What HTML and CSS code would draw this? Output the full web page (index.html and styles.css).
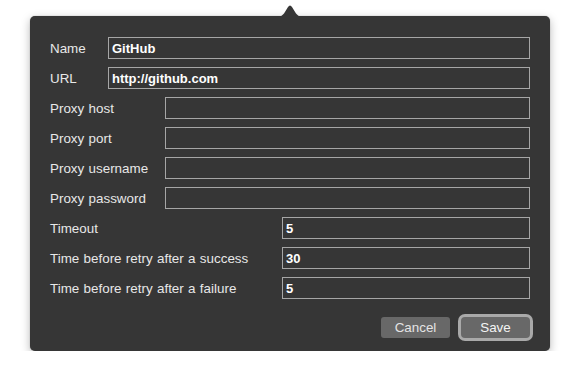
FILE: index.html
```html
<!DOCTYPE html>
<html>
<head>
<meta charset="utf-8">
<link rel="stylesheet" href="styles.css">
</head>
<body>
<div class="stage">
  <div class="popover">
    <div class="arrow"></div>
    <form class="form">
      <div class="group g-basic">
        <label class="label">Name</label>
        <div class="field">GitHub</div>
        <label class="label">URL</label>
        <div class="field">http://github.com</div>
      </div>
      <div class="group g-proxy">
        <label class="label">Proxy host</label>
        <div class="field"></div>
        <label class="label">Proxy port</label>
        <div class="field"></div>
        <label class="label">Proxy username</label>
        <div class="field"></div>
        <label class="label">Proxy password</label>
        <div class="field"></div>
      </div>
      <div class="group g-time">
        <label class="label">Timeout</label>
        <div class="field">5</div>
        <label class="label">Time before retry after a success</label>
        <div class="field">30</div>
        <label class="label">Time before retry after a failure</label>
        <div class="field">5</div>
      </div>
      <div class="actions">
        <button type="button" class="btn">Cancel</button>
        <button type="button" class="btn btn-default">Save</button>
      </div>
    </form>
  </div>
</div>
</body>
</html>
```
FILE: styles.css
```css
html, body {
  margin: 0;
  padding: 0;
  background: #ffffff;
}
body {
  font-family: "Liberation Sans", Arial, sans-serif;
  font-size: 13px;
}
.stage {
  padding: 16px 0 0 30px;
}
.popover {
  position: relative;
  width: 520px;
  height: 335px;
  box-sizing: border-box;
  background: #363636;
  border-radius: 5px;
  box-shadow: 0 3px 10px rgba(0, 0, 0, 0.28), 0 0 1px rgba(0, 0, 0, 0.4);
}
.arrow {
  position: absolute;
  top: -12px;
  left: 245px;
  width: 30px;
  height: 13px;
  background: #363636;
  clip-path: path("M0 13 C5 13 7 12 9 9.5 L13 3 Q15 0 17 3 L21 9.5 C23 12 25 13 30 13 Z");
}
.form {
  display: flex;
  flex-direction: column;
  gap: 8px;
  padding: 21px 20px 0 20px;
}
.group {
  display: grid;
  row-gap: 8px;
  align-items: center;
}
.g-basic { grid-template-columns: 58px 1fr; }
.g-proxy { grid-template-columns: 115px 1fr; }
.g-time { grid-template-columns: 232px 1fr; }
.label {
  color: #e8e8e8;
  white-space: nowrap;
  font-size: 13.4px;
  word-spacing: 0.6px;
  height: 22px;
  box-sizing: border-box;
  padding-top: 2px;
  line-height: 20px;
}
.field {
  height: 22px;
  box-sizing: border-box;
  border: 1px solid #a6a6a6;
  padding: 1px 3px 0;
  color: #ffffff;
  font-weight: bold;
  line-height: 19px;
}
.actions {
  display: flex;
  justify-content: flex-end;
  gap: 11px;
  margin-top: 10px;
}
.btn {
  width: 69px;
  height: 21px;
  border: none;
  border-radius: 3px;
  background: #686868;
  color: #e4e4e4;
  font-family: inherit;
  font-size: 13.4px;
  padding: 1px 0 0;
  line-height: 20px;
}
.btn-default {
  color: #f4f4f4;
  box-shadow: 0 0 0 3px #a9a9a9;
  border-radius: 4px;
}
```
